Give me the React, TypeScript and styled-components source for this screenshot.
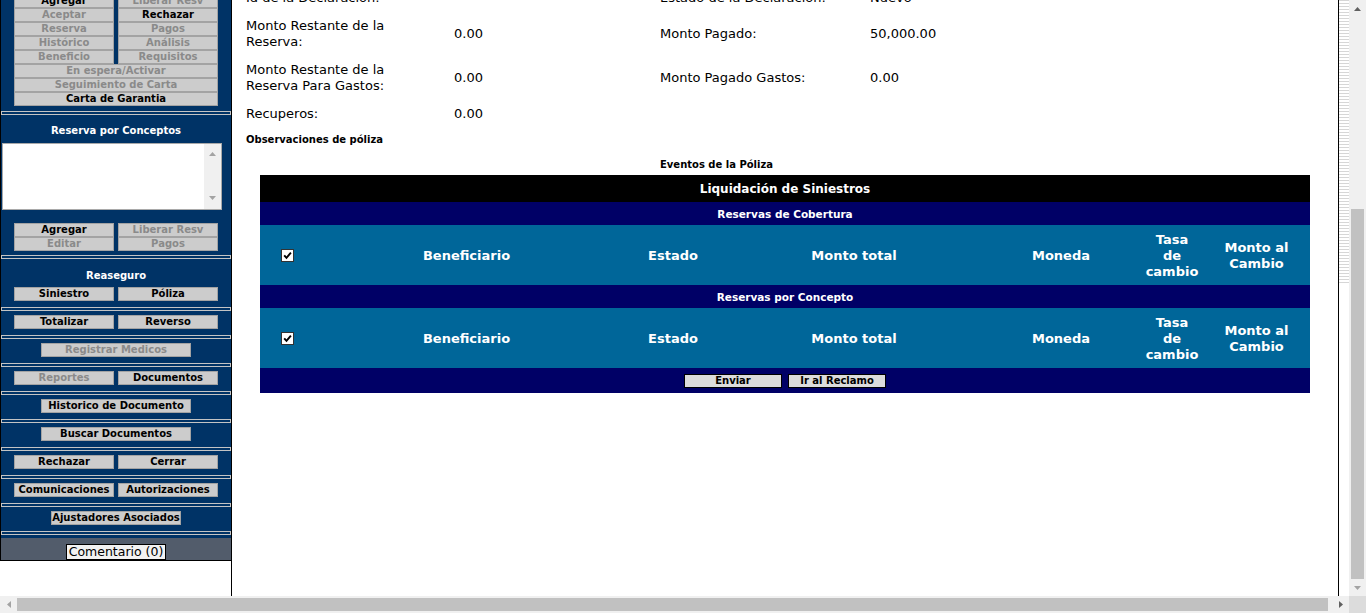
import React from "react";
import styled, { createGlobalStyle } from "styled-components";

const FONT = `"DejaVu Sans", Verdana, sans-serif`;

const GlobalStyle = createGlobalStyle`
  html, body { margin: 0; padding: 0; background: #fff; overflow: hidden; }
  body { font-family: ${FONT}; }
  * { box-sizing: border-box; }
`;

const Screen = styled.div`
  width: 1366px;
  height: 613px;
  display: grid;
  grid-template-columns: 1349px 17px;
  grid-template-rows: 596px 17px;
  overflow: hidden;
  background: #fff;
`;

const Viewport = styled.div`
  display: flex;
  overflow: hidden;
`;

/* ---------- Sidebar ---------- */
const SideFrame = styled.div`
  width: 232px;
  flex: none;
  border-right: 1px solid #000;
  overflow: hidden;
`;

const SidePanel = styled.div`
  margin-top: -6px;
  background: #003366;
  border-left: 1px solid #000;
  border-bottom: 1px solid #000;
`;

const Block = styled.div<{ $pt?: number; $pb?: number }>`
  padding: ${(p) => p.$pt ?? 4}px 0 ${(p) => p.$pb ?? 6}px;
  display: flex;
  flex-direction: column;
  align-items: center;
`;

const Sep = styled.div`
  height: 4px;
  border: 1px solid #c4c4c4;
`;

const BtnGrid = styled.div`
  display: grid;
  grid-template-columns: 100px 100px;
  column-gap: 4px;
`;

const SideBtn = styled.button<{ $w?: number; $wide?: boolean }>`
  appearance: none;
  grid-column: ${(p) => (p.$wide ? "1 / -1" : "auto")};
  width: ${(p) => (p.$w ? `${p.$w}px` : "100%")};
  height: 14px;
  margin: 0;
  padding: 0;
  border: 1px solid #a3a3a3;
  border-radius: 0;
  background: #cccccc;
  color: #000;
  font: bold 10px/12px ${FONT};
  white-space: nowrap;
  text-align: center;
  &:disabled {
    color: #8a8a8a;
  }
`;

const SideTitle = styled.div<{ $pt: number; $mb: number }>`
  color: #fff;
  font: bold 10px/12px ${FONT};
  text-align: center;
  padding-top: ${(p) => p.$pt}px;
  margin-bottom: ${(p) => p.$mb}px;
`;

const ListBox = styled.div`
  align-self: flex-start;
  margin-left: 1px;
  margin-bottom: 13px;
  width: 220px;
  height: 67px;
  border: 1px solid #a9a9a9;
  background: #fff;
  display: flex;
  justify-content: flex-end;
`;

const ListScroll = styled.div`
  width: 17px;
  background: #f0f0f0;
  display: flex;
  flex-direction: column;
  justify-content: space-between;
  align-items: center;
  padding: 8px 0 9px;
`;

const Band = styled.div`
  margin-top: 3px;
  height: 22px;
  background: #525c6b;
  padding-top: 6px;
  display: flex;
  justify-content: center;
`;

const CommentBtn = styled.button`
  appearance: none;
  width: 100px;
  height: 16px;
  margin: 0;
  padding: 0;
  border: 1px solid #000;
  border-radius: 0;
  background: #f2f2f2;
  color: #000;
  font: 12.5px/14px ${FONT};
  white-space: nowrap;
`;

/* ---------- Main ---------- */
const MainFrame = styled.div`
  width: 1107px;
  flex: none;
  border-right: 1px solid #000;
  overflow: hidden;
  color: #000;
  font-family: ${FONT};
`;

const MainScroll = styled.div`
  margin-top: -16px;
`;

const InfoGrid = styled.div`
  display: grid;
  grid-template-columns: 208px 206px 210px 1fr;
  align-items: center;
  padding-left: 14px;
`;

const InfoCell = styled.div<{ $max?: number }>`
  padding: 6px 0;
  font-size: 13px;
  line-height: 16px;
  max-width: ${(p) => (p.$max ? `${p.$max}px` : "none")};
`;

const SmallBold = styled.div<{ $mt: number; $pl: number }>`
  margin-top: ${(p) => p.$mt}px;
  padding-left: ${(p) => p.$pl}px;
  font: bold 10px/12px ${FONT};
`;

const Liq = styled.div`
  width: 1050px;
  margin: 4px auto 0;
  color: #fff;
`;

const TitleRow = styled.div`
  height: 27px;
  background: #000;
  display: flex;
  align-items: center;
  justify-content: center;
  font: bold 12px/14px ${FONT};
`;

const SectionRow = styled.div`
  height: 23px;
  background: #000066;
  display: flex;
  align-items: center;
  justify-content: center;
  font: bold 10.5px/12px ${FONT};
`;

const HeadRow = styled.div`
  height: 60px;
  background: #006699;
  display: grid;
  grid-template-columns: 54px 305px 108px 254px 160px 62px 1fr;
  align-items: center;
  text-align: center;
  font: bold 13px/16px ${FONT};
  padding-top: 1px;
`;

const HeadCell = styled.div`
  padding: 0 4px;
  display: flex;
  justify-content: center;
`;

const Check = styled.span`
  width: 13px;
  height: 13px;
  border: 1px solid #333;
  background: #fff;
  display: inline-flex;
  align-items: center;
  justify-content: center;
`;

const FootRow = styled.div`
  background: #000066;
  padding: 6px 0 5px;
  display: flex;
  justify-content: center;
  gap: 6px;
`;

const FootBtn = styled.button`
  appearance: none;
  width: 98px;
  height: 14px;
  margin: 0;
  padding: 0;
  border: 1px solid #000;
  border-radius: 0;
  background: #dcdcdc;
  color: #000;
  font: bold 10px/12px ${FONT};
`;

const Stripes = styled.div`
  width: 10px;
  flex: none;
  height: 285px;
  background: repeating-linear-gradient(
    180deg,
    #d6d6d6 0px,
    #d6d6d6 1px,
    #ffffff 1px,
    #ffffff 3px
  );
`;

/* ---------- Scrollbars ---------- */
const VScroll = styled.div`
  background: #f0f0f0;
  display: flex;
  flex-direction: column;
`;

const HScroll = styled.div`
  background: #f0f0f0;
  display: flex;
  align-items: center;
`;

const ArrowBox = styled.div`
  width: 17px;
  height: 17px;
  flex: none;
  display: flex;
  align-items: center;
  justify-content: center;
`;

const VTrack = styled.div`
  flex: 1;
  padding: 0 2px;
`;

const VThumb = styled.div<{ $top: number; $size: number }>`
  margin-top: ${(p) => p.$top}px;
  height: ${(p) => p.$size}px;
  background: #c1c1c1;
`;

const HTrack = styled.div`
  flex: 1;
  height: 13px;
  display: flex;
`;

const HThumb = styled.div<{ $size: number }>`
  width: ${(p) => p.$size}px;
  background: #c1c1c1;
`;

const Corner = styled.div`
  background: #dcdcdc;
`;

type Dir = "up" | "down" | "left" | "right";
const Arrow: React.FC<{ dir: Dir; color: string }> = ({ dir, color }) => {
  const pts: Record<Dir, string> = {
    up: "0,4 3.5,0 7,4",
    down: "0,0 7,0 3.5,4",
    left: "4,0 4,7 0,3.5",
    right: "0,0 4,3.5 0,7",
  };
  const vertical = dir === "up" || dir === "down";
  return (
    <svg
      width={vertical ? 7 : 4}
      height={vertical ? 4 : 7}
      viewBox={vertical ? "0 0 7 4" : "0 0 4 7"}
    >
      <polygon points={pts[dir]} fill={color} />
    </svg>
  );
};

const CheckBox = () => (
  <Check>
    <svg width="9" height="9" viewBox="0 0 9 9">
      <path d="M1.2 4.3 L3.5 6.8 L7.9 1.6" stroke="#000" strokeWidth="1.9" fill="none" />
    </svg>
  </Check>
);

type B = [string, boolean];
const Pair: React.FC<{ a: B; b: B }> = ({ a, b }) => (
  <>
    <SideBtn disabled={!a[1]}>{a[0]}</SideBtn>
    <SideBtn disabled={!b[1]}>{b[0]}</SideBtn>
  </>
);

const HeaderCells = () => (
  <HeadRow>
    <HeadCell>
      <CheckBox />
    </HeadCell>
    <HeadCell>Beneficiario</HeadCell>
    <HeadCell>Estado</HeadCell>
    <HeadCell>Monto total</HeadCell>
    <HeadCell>Moneda</HeadCell>
    <HeadCell>Tasa de cambio</HeadCell>
    <HeadCell>Monto al Cambio</HeadCell>
  </HeadRow>
);

const Sidebar = () => (
  <SideFrame>
    <SidePanel>
      <Block $pt={0} $pb={5}>
        <BtnGrid>
          <Pair a={["Agregar", true]} b={["Liberar Resv", false]} />
          <Pair a={["Aceptar", false]} b={["Rechazar", true]} />
          <Pair a={["Reserva", false]} b={["Pagos", false]} />
          <Pair a={["Histórico", false]} b={["Análisis", false]} />
          <Pair a={["Beneficio", false]} b={["Requisitos", false]} />
          <SideBtn $wide disabled>En espera/Activar</SideBtn>
          <SideBtn $wide disabled>Seguimiento de Carta</SideBtn>
          <SideBtn $wide>Carta de Garantia</SideBtn>
        </BtnGrid>
      </Block>
      <Sep />
      <Block $pt={0} $pb={4}>
        <SideTitle $pt={10} $mb={6}>Reserva por Conceptos</SideTitle>
        <ListBox>
          <ListScroll>
            <Arrow dir="up" color="#a3a3a3" />
            <Arrow dir="down" color="#a3a3a3" />
          </ListScroll>
        </ListBox>
        <BtnGrid>
          <Pair a={["Agregar", true]} b={["Liberar Resv", false]} />
          <Pair a={["Editar", false]} b={["Pagos", false]} />
        </BtnGrid>
      </Block>
      <Sep />
      <Block $pt={0}>
        <SideTitle $pt={11} $mb={5}>Reaseguro</SideTitle>
        <BtnGrid>
          <Pair a={["Siniestro", true]} b={["Póliza", true]} />
        </BtnGrid>
      </Block>
      <Sep />
      <Block>
        <BtnGrid>
          <Pair a={["Totalizar", true]} b={["Reverso", true]} />
        </BtnGrid>
      </Block>
      <Sep />
      <Block>
        <SideBtn $w={150} disabled>Registrar Medicos</SideBtn>
      </Block>
      <Sep />
      <Block>
        <BtnGrid>
          <Pair a={["Reportes", false]} b={["Documentos", true]} />
        </BtnGrid>
      </Block>
      <Sep />
      <Block>
        <SideBtn $w={150}>Historico de Documento</SideBtn>
      </Block>
      <Sep />
      <Block>
        <SideBtn $w={150}>Buscar Documentos</SideBtn>
      </Block>
      <Sep />
      <Block>
        <BtnGrid>
          <Pair a={["Rechazar", true]} b={["Cerrar", true]} />
        </BtnGrid>
      </Block>
      <Sep />
      <Block>
        <BtnGrid>
          <Pair a={["Comunicaciones", true]} b={["Autorizaciones", true]} />
        </BtnGrid>
      </Block>
      <Sep />
      <Block>
        <SideBtn $w={130}>Ajustadores Asociados</SideBtn>
      </Block>
      <Sep />
      <Band>
        <CommentBtn>Comentario (0)</CommentBtn>
      </Band>
    </SidePanel>
  </SideFrame>
);

const rows: [string, string, string, string][] = [
  ["Id de la Declaración:", "", "Estado de la Declaración:", "Nuevo"],
  ["Monto Restante de la Reserva:", "0.00", "Monto Pagado:", "50,000.00"],
  ["Monto Restante de la Reserva Para Gastos:", "0.00", "Monto Pagado Gastos:", "0.00"],
  ["Recuperos:", "0.00", "", ""],
];

const Main = () => (
  <MainFrame>
    <MainScroll>
      <InfoGrid>
        {rows.map((r, i) => (
          <React.Fragment key={i}>
            <InfoCell $max={165}>{r[0]}</InfoCell>
            <InfoCell>{r[1]}</InfoCell>
            <InfoCell>{r[2]}</InfoCell>
            <InfoCell>{r[3]}</InfoCell>
          </React.Fragment>
        ))}
      </InfoGrid>
      <SmallBold $mt={6} $pl={14}>Observaciones de póliza</SmallBold>
      <SmallBold $mt={13} $pl={428}>Eventos de la Póliza</SmallBold>
      <Liq>
        <TitleRow>Liquidación de Siniestros</TitleRow>
        <SectionRow>Reservas de Cobertura</SectionRow>
        <HeaderCells />
        <SectionRow>Reservas por Concepto</SectionRow>
        <HeaderCells />
        <FootRow>
          <FootBtn>Enviar</FootBtn>
          <FootBtn>Ir al Reclamo</FootBtn>
        </FootRow>
      </Liq>
    </MainScroll>
  </MainFrame>
);

export default function App() {
  return (
    <>
      <GlobalStyle />
      <Screen>
        <Viewport>
          <Sidebar />
          <Main />
          <Stripes />
        </Viewport>
        <VScroll>
          <ArrowBox>
            <Arrow dir="up" color="#606060" />
          </ArrowBox>
          <VTrack>
            <VThumb $top={192} $size={370} />
          </VTrack>
          <ArrowBox>
            <Arrow dir="down" color="#a3a3a3" />
          </ArrowBox>
        </VScroll>
        <HScroll>
          <ArrowBox>
            <Arrow dir="left" color="#a3a3a3" />
          </ArrowBox>
          <HTrack>
            <HThumb $size={1311} />
          </HTrack>
          <ArrowBox>
            <Arrow dir="right" color="#606060" />
          </ArrowBox>
        </HScroll>
        <Corner />
      </Screen>
    </>
  );
}
